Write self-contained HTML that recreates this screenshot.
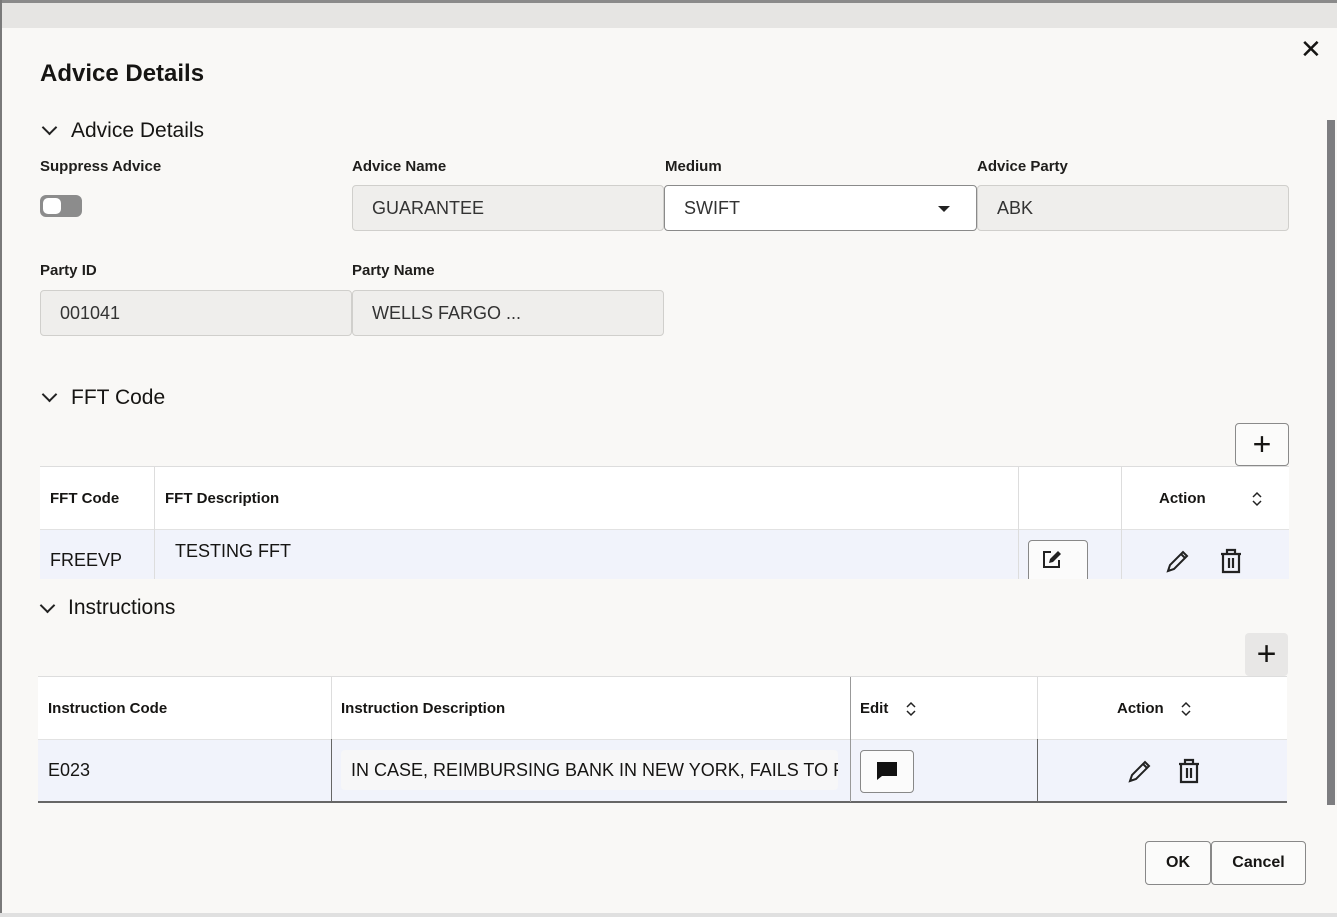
<!DOCTYPE html>
<html><head><style>
body{margin:0;width:1337px;height:917px;background:#f9f8f6;font-family:"Liberation Sans",sans-serif;color:#161513;position:relative;overflow:hidden}
.a{position:absolute}
.lbl{font-size:15px;font-weight:bold;color:#1f1e1c}
.inp{position:absolute;height:46px;box-sizing:border-box;border:1px solid #d0cfcc;border-radius:4px;background:#efeeec;font-size:18px;padding:12px 19px;color:#333}
.sec{font-size:21px;font-weight:normal}
.th{font-size:15px;font-weight:bold}
.chev{display:inline-block;width:9px;height:9px;border-right:2.5px solid #222;border-bottom:2.5px solid #222;transform:rotate(45deg)}
</style></head><body>
<div class="a" style="left:0;top:0;width:1337px;height:28px;background:#e6e5e3"></div>
<div class="a" style="left:0;top:0;width:1337px;height:3px;background:#8a8a8a"></div>
<div class="a" style="left:0;top:0;width:2px;height:917px;background:#7a7a7a"></div>
<div class="a" style="left:1327px;top:120px;width:8px;height:685px;background:#7d7d80"></div>
<div class="a" style="left:0;top:913px;width:1337px;height:4px;background:#e0e0e0"></div>

<div class="a" style="left:40px;top:60px;font-size:24px;font-weight:bold">Advice Details</div>
<div class="a" style="left:1300px;top:34px;font-size:26px">✕</div>

<div class="a" style="left:44px;top:120px"><span class="chev"></span></div>
<div class="a sec" style="left:71px;top:119px">Advice Details</div>

<div class="a lbl" style="left:40px;top:158px">Suppress Advice</div>
<div class="a" style="left:40px;top:195px;width:42px;height:22px;border-radius:6px;background:#8c8c8c"><div style="margin:3px;width:18px;height:16px;border-radius:5px;background:#fff"></div></div>
<div class="a lbl" style="left:352px;top:158px">Advice Name</div>
<div class="inp" style="left:352px;top:185px;width:312px">GUARANTEE</div>
<div class="a lbl" style="left:665px;top:158px">Medium</div>
<div class="inp" style="left:664px;top:185px;width:313px;background:#fff;border-color:#8a8a8a">SWIFT<span style="position:absolute;right:26px;top:20px;border:6px solid transparent;border-top:6px solid #222;border-bottom:0"></span></div>
<div class="a lbl" style="left:977px;top:158px">Advice Party</div>
<div class="inp" style="left:977px;top:185px;width:312px">ABK</div>

<div class="a lbl" style="left:40px;top:262px">Party ID</div>
<div class="inp" style="left:40px;top:290px;width:312px">001041</div>
<div class="a lbl" style="left:352px;top:262px">Party Name</div>
<div class="inp" style="left:352px;top:290px;width:312px">WELLS FARGO ...</div>

<div class="a" style="left:44px;top:387px"><span class="chev"></span></div>
<div class="a sec" style="left:71px;top:386px">FFT Code</div>
<div class="a" style="left:1235px;top:423px;width:52px;height:41px;border:1px solid #8a8a8a;border-radius:4px;background:#fbfbfa;text-align:center;font-size:32px;line-height:40px;font-weight:300">+</div>

<div class="a" style="left:40px;top:466px;width:1249px;height:112px;background:#fff;border-top:1px solid #ddd;overflow:hidden">
 <div class="a" style="left:0;top:62px;width:1249px;height:50px;background:#f1f3fb;border-top:1px solid #e2e2e2"></div>
 <div class="a" style="left:114px;top:0;width:1px;height:112px;background:#ddd"></div>
 <div class="a" style="left:978px;top:0;width:1px;height:112px;background:#ddd"></div>
 <div class="a" style="left:1081px;top:0;width:1px;height:112px;background:#ddd"></div>
 <div class="a th" style="left:10px;top:23px">FFT Code</div>
 <div class="a th" style="left:125px;top:23px">FFT Description</div>
 <div class="a th" style="left:1119px;top:23px">Action</div>
 <svg class="a" style="left:1211px;top:24px" width="12" height="16" viewBox="0 0 12 16"><path d="M2 6l4-4 4 4M2 10l4 4 4-4" fill="none" stroke="#222" stroke-width="1.5"/></svg>
 <div class="a" style="left:10px;top:83px;font-size:18px">FREEVP</div>
 <div class="a" style="left:135px;top:74px;font-size:18px">TESTING FFT</div>
 <div class="a" style="left:988px;top:73px;width:58px;height:50px;border:1px solid #888;border-radius:4px;background:#fbfbfb"></div>
 <svg class="a" style="left:1001px;top:82px" width="22" height="22" viewBox="0 0 22 22"><path d="M10 3H3v15h15v-7" fill="none" stroke="#222" stroke-width="2"/><path d="M8 14l1-4 8-8 3 3-8 8z" fill="#222"/></svg>
 <svg class="a" style="left:1125px;top:81px" width="26" height="26" viewBox="0 0 26 26"><path d="M3 23l2-6L18 4l4 4L9 21z M16 6l4 4" fill="none" stroke="#222" stroke-width="2"/></svg>
 <svg class="a" style="left:1179px;top:81px" width="24" height="26" viewBox="0 0 24 26"><path d="M2 6h20M8 6V2h8v4M4 6v18h16V6M10 10v10M14 10v10" fill="none" stroke="#222" stroke-width="2.2"/></svg>
</div>

<div class="a" style="left:42px;top:598px"><span class="chev"></span></div>
<div class="a sec" style="left:68px;top:596px">Instructions</div>
<div class="a" style="left:1245px;top:633px;width:43px;height:43px;border-radius:4px;background:#e8e7e6;text-align:center;font-size:34px;line-height:42px;font-weight:300">+</div>

<div class="a" style="left:38px;top:676px;width:1249px;height:126px;background:#fff;border-top:1px solid #ddd">
 <div class="a" style="left:0;top:62px;width:1249px;height:62px;background:#f1f3fb;border-top:1px solid #e2e2e2"></div>
 <div class="a" style="left:0;top:124px;width:1249px;height:2px;background:#666"></div>
 <div class="a" style="left:293px;top:0;width:1px;height:125px;background:#ddd"></div>
 <div class="a" style="left:293px;top:62px;width:1px;height:63px;background:#666"></div>
 <div class="a" style="left:812px;top:0;width:1px;height:125px;background:#999"></div>
 <div class="a" style="left:999px;top:0;width:1px;height:125px;background:#ddd"></div>
 <div class="a" style="left:999px;top:62px;width:1px;height:63px;background:#666"></div>
 <div class="a th" style="left:10px;top:23px">Instruction Code</div>
 <div class="a th" style="left:303px;top:23px">Instruction Description</div>
 <div class="a th" style="left:822px;top:23px">Edit</div>
 <svg class="a" style="left:867px;top:24px" width="12" height="16" viewBox="0 0 12 16"><path d="M2 6l4-4 4 4M2 10l4 4 4-4" fill="none" stroke="#222" stroke-width="1.5"/></svg>
 <div class="a th" style="left:1079px;top:23px">Action</div>
 <svg class="a" style="left:1142px;top:24px" width="12" height="16" viewBox="0 0 12 16"><path d="M2 6l4-4 4 4M2 10l4 4 4-4" fill="none" stroke="#222" stroke-width="1.5"/></svg>
 <div class="a" style="left:10px;top:83px;font-size:18px">E023</div>
 <div class="a" style="left:303px;top:73px;width:497px;height:40px;background:#f7f7f8;border-radius:4px;overflow:hidden;white-space:nowrap;font-size:18px;padding:10px 10px;box-sizing:border-box">IN CASE, REIMBURSING BANK IN NEW YORK, FAILS TO PAY</div>
 <div class="a" style="left:822px;top:73px;width:52px;height:41px;border:1px solid #888;border-radius:4px;background:#fbfbfb"></div>
 <svg class="a" style="left:838px;top:84px" width="22" height="20" viewBox="0 0 22 20"><path d="M1 1h20v14H6l-5 4z" fill="#111"/></svg>
 <svg class="a" style="left:1089px;top:81px" width="26" height="26" viewBox="0 0 26 26"><path d="M3 23l2-6L18 4l4 4L9 21z M16 6l4 4" fill="none" stroke="#222" stroke-width="2"/></svg>
 <svg class="a" style="left:1139px;top:81px" width="24" height="26" viewBox="0 0 24 26"><path d="M2 6h20M8 6V2h8v4M4 6v18h16V6M10 10v10M14 10v10" fill="none" stroke="#222" stroke-width="2.2"/></svg>
</div>

<div class="a" style="left:1145px;top:841px;width:64px;height:42px;border:1px solid #888;border-radius:4px;background:#fbfbfa;text-align:center;line-height:42px;font-size:16px;font-weight:bold">OK</div>
<div class="a" style="left:1211px;top:841px;width:93px;height:42px;border:1px solid #888;border-radius:4px;background:#fbfbfa;text-align:center;line-height:42px;font-size:16px;font-weight:bold">Cancel</div>
</body></html>
